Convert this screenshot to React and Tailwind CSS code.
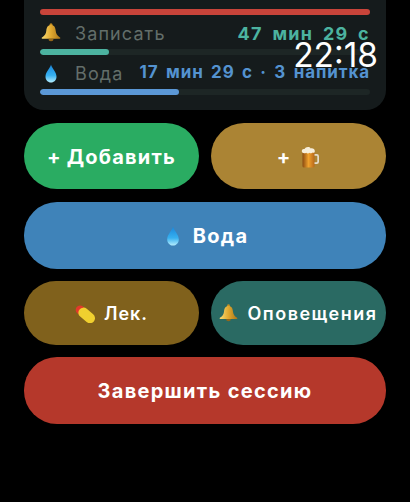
import React from 'react';

const Bell = ({ className }) => (
    <svg viewBox="0 0 20 20" className={className}>
        <defs>
            <linearGradient id="bellFill" x1="0" y1="0" x2="1" y2="0">
                <stop offset="0" stopColor="#f9dc74" />
                <stop offset="0.5" stopColor="#e0a82f" />
                <stop offset="1" stopColor="#a8741a" />
            </linearGradient>
        </defs>
        <circle cx="10" cy="1.800" r="1.500" fill="#c58f22" />
        <path d="M10 2c3.200 0 4.400 2.400 4.700 5.800.2 2.800 1.400 4.800 4.300 6.700.6.400.4 1.200-.3 1.200H1.300c-.7 0-.9-.8-.3-1.200 2.900-1.900 4.100-3.900 4.300-6.700C5.600 4.400 6.800 2 10 2z" fill="url(#bellFill)" />
        <path d="M7.500 15.700h5a2.500 2.500 0 0 1-5 0z" fill="#94661a" />
    </svg>
);

const Drop = ({ className }) => (
    <svg viewBox="0 0 14 20" className={className}>
        <defs>
            <linearGradient id="dropFill" x1="0" y1="0" x2="0" y2="1">
                <stop offset="0" stopColor="#1a86da" />
                <stop offset="0.6" stopColor="#36b0f0" />
                <stop offset="1" stopColor="#b4ecfc" />
            </linearGradient>
        </defs>
        <path d="M7 .5c.8 4 5.800 7.800 5.800 12.900C12.800 16.900 10.200 19.500 7 19.500s-5.800-2.600-5.800-6.100C1.200 8.300 6.200 4.500 7 .5z" fill="url(#dropFill)" />
    </svg>
);

const Pill = ({ className }) => (
    <svg viewBox="0 0 20 18" className={className}>
        <g transform="rotate(40 10 9)">
            <path d="M10 4.600H3.600a4.400 4.400 0 0 0 0 8.800H10z" fill="#e2392b" />
            <path d="M8 3.900h8.400a5.100 5.100 0 0 1 0 10.200H8a5.100 5.100 0 0 1 0-10.200z" fill="#f0d02f" />
        </g>
    </svg>
);

const Beer = ({ className }) => (
    <svg viewBox="0 0 20 22" className={className}>
        <defs>
            <linearGradient id="beerFill" x1="0" y1="0" x2="1" y2="0">
                <stop offset="0" stopColor="#8a4a10" />
                <stop offset="0.5" stopColor="#f0a22e" />
                <stop offset="1" stopColor="#b8681a" />
            </linearGradient>
        </defs>
        <path d="M14 8h2.800a2.200 2.200 0 0 1 2.200 2.200v5.600a2.200 2.200 0 0 1-2.200 2.200H14v-1.700h2.500a.8.8 0 0 0 .8-.8v-5a.8.8 0 0 0-.8-.8H14z" fill="#e4dccb" />
        <rect x="2.500" y="5" width="12" height="16.500" rx="1.500" fill="url(#beerFill)" />
        <path d="M2.200 6.500C1 4.500 2.500 2.500 4.500 3c1-2.300 5-2.800 6.200-.6 2-.6 4.300.8 4.100 3 0 1.300-1.100 1.800-2 1.200-.9.900-2.300.9-3.200.2-1.300.9-2.800.7-3.400-.1-1 .8-3 .9-4-.2z" fill="#f6eedb" />
    </svg>
);

const Row = ({ icon, label, value, valueClass, barClass, pct }) => (
    <div>
        <div className="flex items-center h-[22px]">
            <span className="w-[35px] shrink-0 flex pl-[1px]">{icon}</span>
            <span className="text-[18px] tracking-[1.1px] text-[#636e6a] font-normal">{label}</span>
            <span className={`ml-auto font-bold whitespace-pre ${valueClass}`}>{value}</span>
        </div>
        <div className="h-[6px] mt-[5px] rounded-full bg-[#1d2625] overflow-hidden">
            <div className={`h-full rounded-full ${barClass}`} style={{ width: `${pct}%` }} />
        </div>
    </div>
);

const Pillbtn = ({ className, children }) => (
    <button className={`flex items-center justify-center rounded-[33px] text-white font-bold pt-[1px] ${className}`}>
        {children}
    </button>
);

export default function App() {
    return (
        <div className="relative w-[410px] h-[502px] bg-black overflow-hidden font-['Inter','Liberation_Sans',sans-serif]">
            <div className="absolute right-[32px] top-[36px] text-white text-[33.500px] leading-[38px] font-normal z-10">22:18</div>

            <div className="mx-[24px] h-[110px] bg-[#151b1c] rounded-b-[20px] px-[16px] pt-[9px] flex flex-col">
                <div className="h-[6px] rounded-full bg-[#c8443a]" />
                <div className="mt-[7px]">
                    <Row
                        icon={<Bell className="w-[20px] h-[20px]" />}
                        label="Записать"
                        value="47 мин 29 с"
                        valueClass="text-[#4cb3a0] text-[18px] tracking-[1.3px] [word-spacing:4px]"
                        barClass="bg-[#4cb3a0]"
                        pct={21}
                    />
                </div>
                <div className="mt-[7px]">
                    <Row
                        icon={<Drop className="w-[14px] h-[19px] ml-[3px]" />}
                        label="Вода"
                        value="17 мин 29 с · 3 напитка"
                        valueClass="text-[#5493d0] text-[17px] tracking-[0.9px] [word-spacing:2.500px]"
                        barClass="bg-[#5b98d6]"
                        pct={42}
                    />
                </div>
            </div>

            <div className="mx-[24px] mt-[13px] flex flex-col gap-[12px]">
                <div className="flex gap-[12px] mb-[1px]">
                    <Pillbtn className="flex-1 h-[66px] bg-[#2aac62] text-[20px] tracking-[1.200px] gap-[5px]">
                        <span>+</span>
                        <span>Добавить</span>
                    </Pillbtn>
                    <Pillbtn className="flex-1 h-[66px] bg-[#ab8434] text-[20px] gap-[10px]">
                        <span>+</span>
                        <Beer className="w-[20px] h-[22px]" />
                    </Pillbtn>
                </div>
                <Pillbtn className="h-[67px] bg-[#3f83b9] text-[20px] tracking-[1.300px] gap-[13px] pl-[4px]">
                    <Drop className="w-[14px] h-[20px]" />
                    <span>Вода</span>
                </Pillbtn>
                <div className="flex gap-[12px]">
                    <Pillbtn className="flex-1 h-[64px] bg-[#80611c] text-[18px] tracking-[1px] gap-[9px] font-semibold">
                        <Pill className="w-[20px] h-[18px]" />
                        <span>Лек.</span>
                    </Pillbtn>
                    <Pillbtn className="flex-1 h-[64px] bg-[#2a6a63] text-[18px] tracking-[1.500px] gap-[9px] whitespace-nowrap font-semibold">
                        <Bell className="w-[19px] h-[19px]" />
                        <span>Оповещения</span>
                    </Pillbtn>
                </div>
                <Pillbtn className="h-[67px] bg-[#b5382b] text-[20px] tracking-[1.300px]">
                    Завершить сессию
                </Pillbtn>
            </div>
        </div>
    );
}
